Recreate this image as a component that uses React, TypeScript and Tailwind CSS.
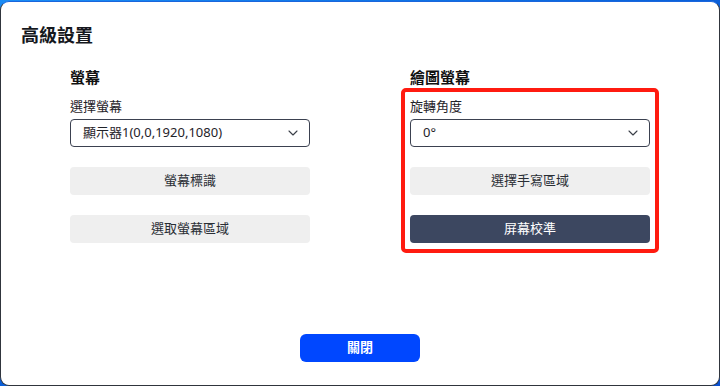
import React from 'react';

const font = { fontFamily: '"Noto Sans", "Noto Sans CJK TC", sans-serif' };

function Chevron() {
  return (
    <svg width="10" height="6" viewBox="0 0 10 6" fill="none" className="text-[#3a3f48]">
      <path d="M1 1l4 4 4-4" stroke="currentColor" strokeWidth="1.1" strokeLinecap="round" strokeLinejoin="round" />
    </svg>
  );
}

function Select({ value }: { value: string }) {
  return (
    <div className="mt-1 flex h-[28px] items-center justify-between rounded-[4px] border border-[#3b4150] bg-white pl-[12px] pr-[11px] text-[13px] text-[#1f2329]">
      <span>{value}</span>
      <Chevron />
    </div>
  );
}

function GrayButton({ label }: { label: string }) {
  return (
    <button className="mt-5 flex h-[28px] w-full items-center justify-center rounded-[4px] bg-[#efefef] text-[13px] text-[#2a2e35]">
      {label}
    </button>
  );
}

export default function App() {
  return (
    <div
      className="h-[386px] w-[720px] overflow-hidden bg-gradient-to-br from-[#1a8cf5] via-[#0a5fd9] to-[#0950d0]"
      style={font}
    >
      <div className="relative flex h-[385px] w-[720px] mt-px flex-col rounded-[9px] border border-[#30353d] border-t-[#1a66dc] bg-white">
        <h1 className="pl-[20px] pt-[21px] text-[18px] font-semibold leading-[24px] text-[#15181d]">高級設置</h1>

        <div className="mt-5 grid grid-cols-2 gap-[100px] px-[69px]">
          {/* left column */}
          <div>
            <h2 className="text-[15px] font-bold leading-[20px] text-[#111]">螢幕</h2>
            <div className="mt-[10px] text-[13px] leading-[18px] text-[#1f2329]">選擇螢幕</div>
            <Select value="顯示器1(0,0,1920,1080)" />
            <GrayButton label="螢幕標識" />
            <GrayButton label="選取螢幕區域" />
          </div>

          {/* right column */}
          <div className="relative">
            <h2 className="text-[15px] font-bold leading-[20px] text-[#111]">繪圖螢幕</h2>
            <div className="mt-[10px] text-[13px] leading-[18px] text-[#1f2329]">旋轉角度</div>
            <Select value="0°" />
            <GrayButton label="選擇手寫區域" />
            <button className="mt-5 flex h-[28px] w-full items-center justify-center rounded-[4px] bg-[#3c4760] text-[13px] text-white">
              屏幕校準
            </button>
            <div className="pointer-events-none absolute -left-[9px] -right-[9px] top-[21px] h-[165px] rounded-[5px] border-4 border-[#ff1b10]" />
          </div>
        </div>

        <div className="mt-auto mb-[23px] flex justify-center">
          <button className="h-[28px] w-[120px] rounded-[6px] bg-[#0047ff] text-[13px] font-bold text-white">關閉</button>
        </div>
      </div>
    </div>
  );
}
